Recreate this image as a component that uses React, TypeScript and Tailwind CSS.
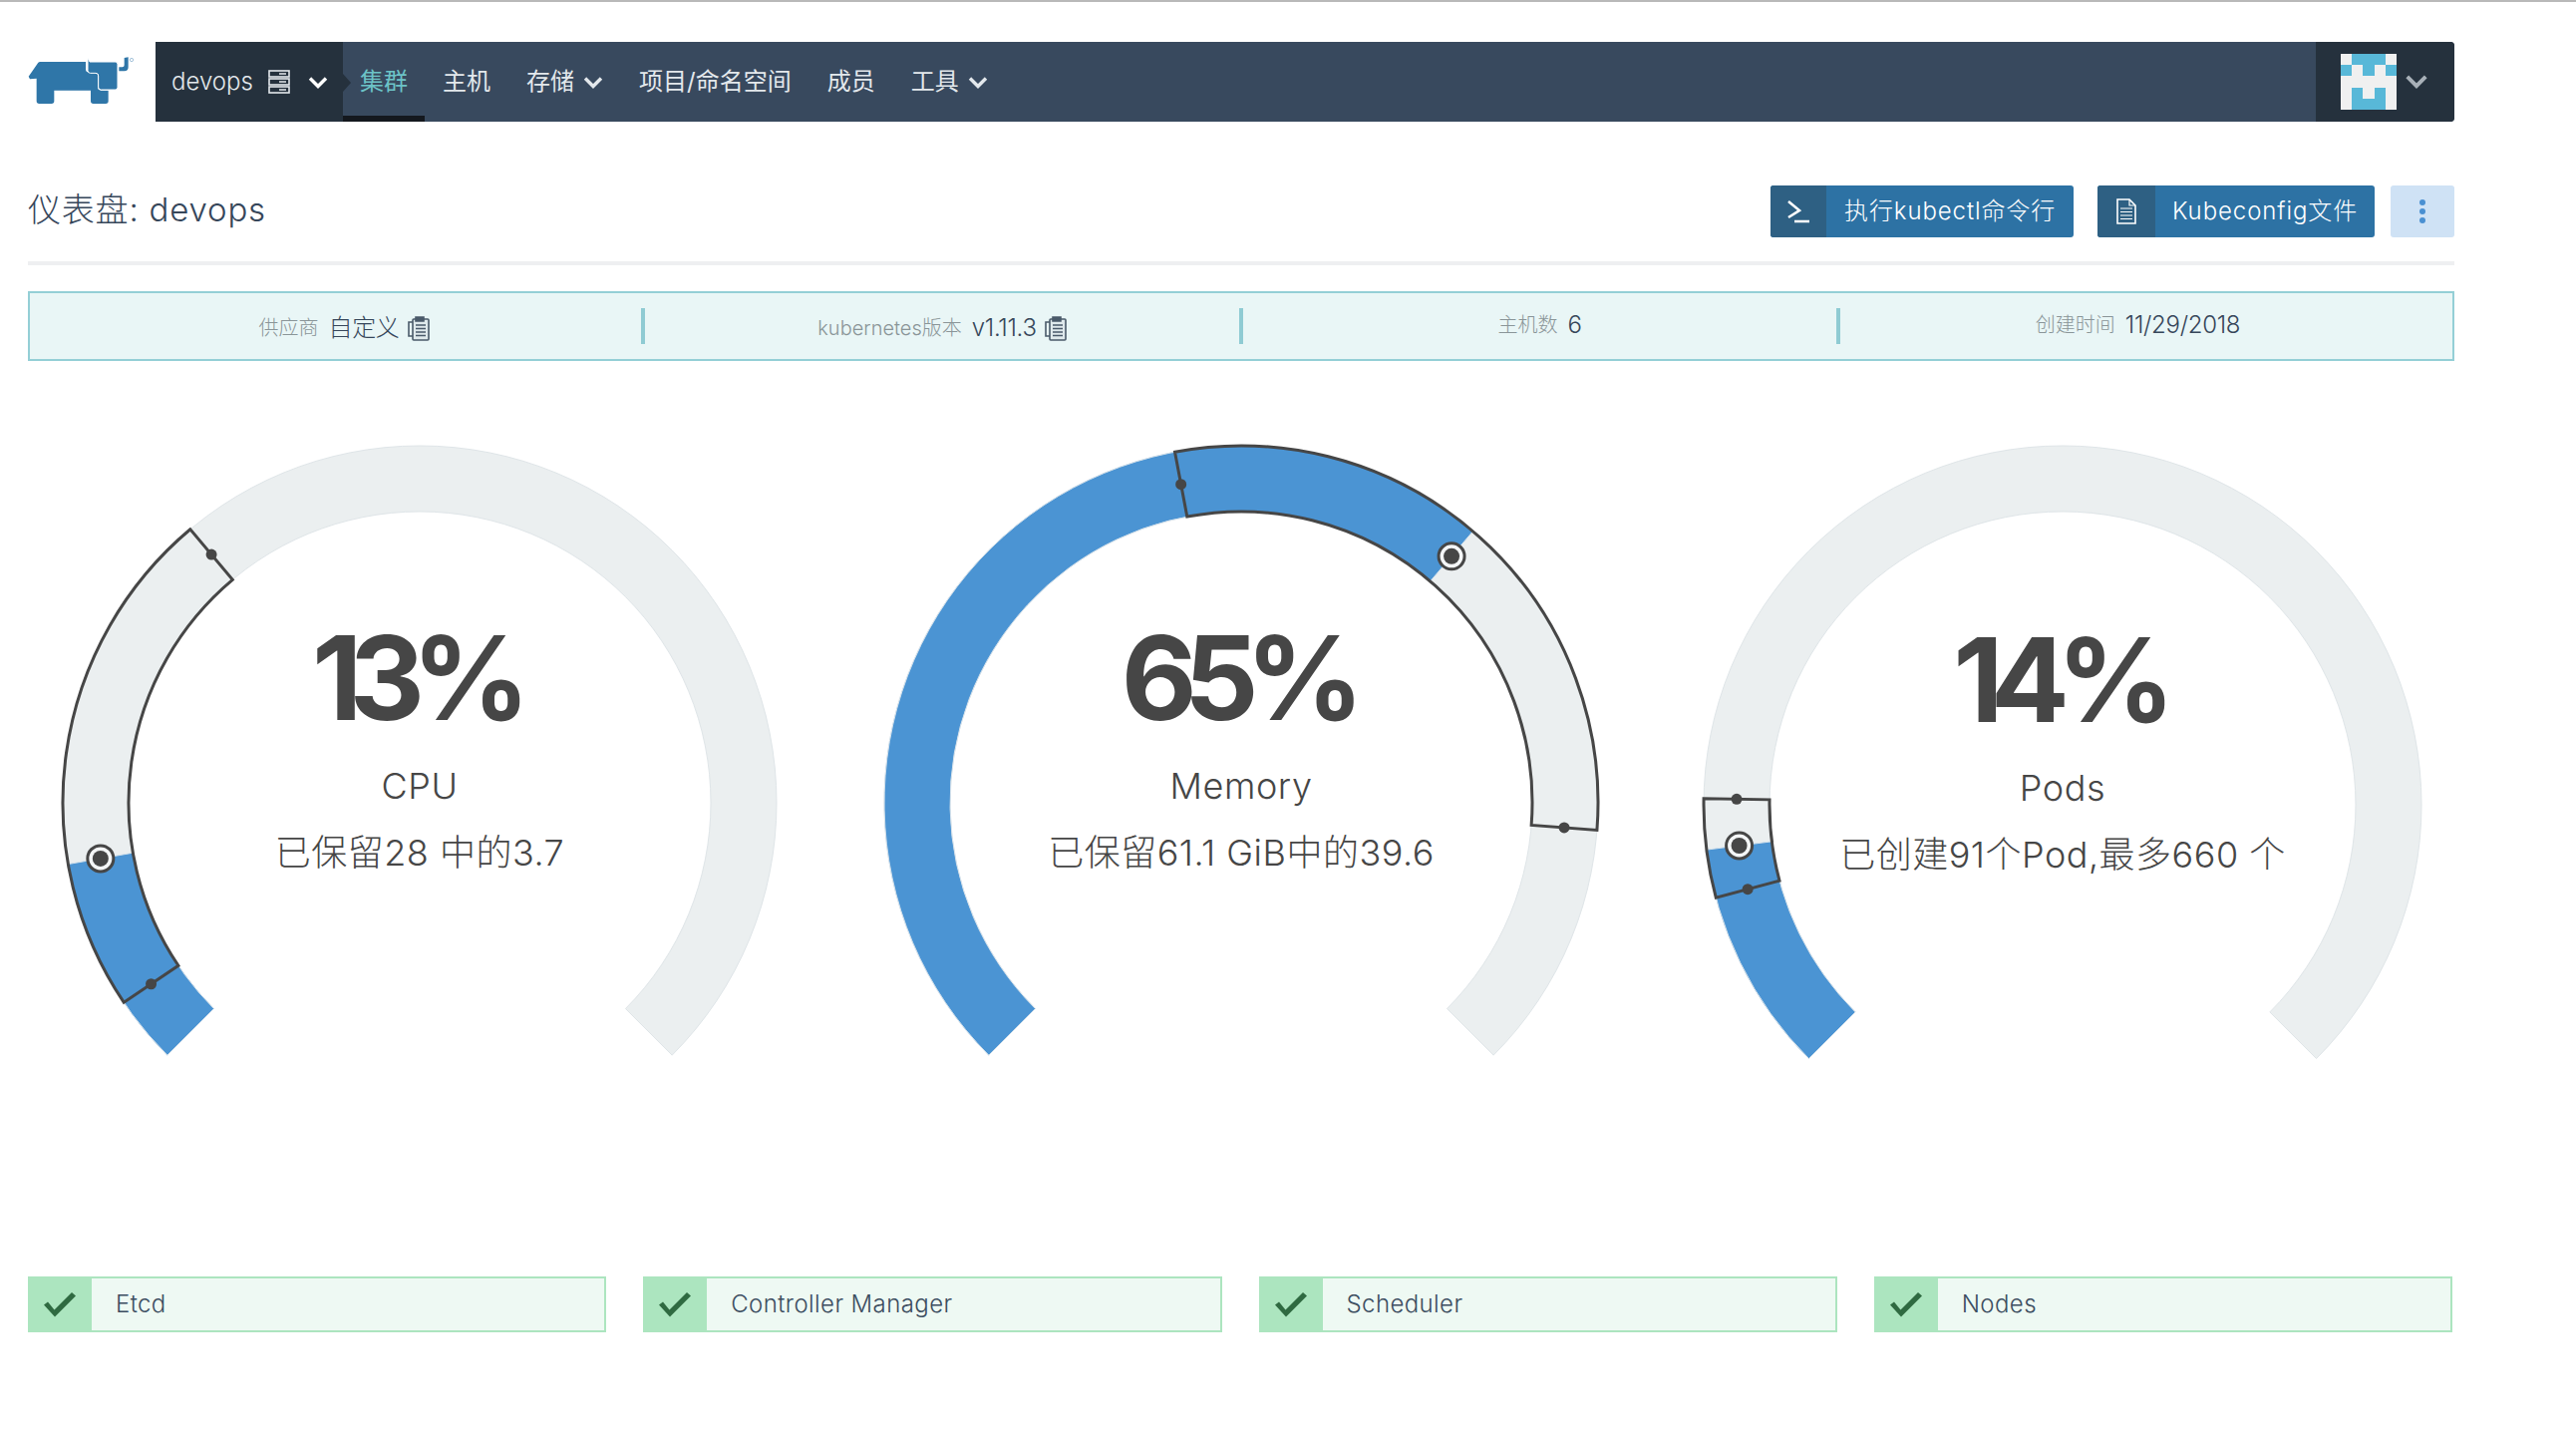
const fontStack = "font-['Inter','Noto_Sans_CJK_SC',sans-serif]";

function polar(cx: number, cy: number, r: number, deg: number) {
  const a = ((deg - 90) * Math.PI) / 180;
  return [cx + r * Math.cos(a), cy + r * Math.sin(a)];
}

function sector(cx: number, cy: number, r0: number, r1: number, a0: number, a1: number) {
  const [ax, ay] = polar(cx, cy, r1, a0);
  const [bx, by] = polar(cx, cy, r1, a1);
  const [c, d] = polar(cx, cy, r0, a1);
  const [e, f] = polar(cx, cy, r0, a0);
  const large = a1 - a0 > 180 ? 1 : 0;
  return `M${ax} ${ay}A${r1} ${r1} 0 ${large} 1 ${bx} ${by}L${c} ${d}A${r0} ${r0} 0 ${large} 0 ${e} ${f}Z`;
}

interface GaugeProps {
  pct: number;
  label: string;
  detail: string;
  lo: number;
  hi: number;
  outer: number;
  cy: number;
}

function Gauge({ pct, label, detail, lo, hi, outer, cy }: GaugeProps) {
  const cx = 412;
  const inner = outer - 66;
  const mid = outer - 33;
  const fillEnd = -135 + (pct / 100) * 270;
  const target = polar(cx, cy, mid, fillEnd);
  const dotLo = polar(cx, cy, mid, lo);
  const dotHi = polar(cx, cy, mid, hi);

  return (
    <div className="relative h-[680px]">
      <svg width="824" height="680" viewBox="0 0 824 680" className="absolute left-0 top-0">
        <path d={sector(cx, cy, inner, outer, -135, 135)} fill="#ebeff0" stroke="#dfe5e8" strokeWidth="1" />
        <path d={sector(cx, cy, inner, outer, -135, fillEnd)} fill="#4b94d3" stroke="#d5e2ec" strokeWidth="1" />
        <path d={sector(cx, cy, inner, outer, lo, hi)} fill="none" stroke="#464646" strokeWidth="3" />
        <circle cx={dotLo[0]} cy={dotLo[1]} r="5.5" fill="#464646" />
        <circle cx={dotHi[0]} cy={dotHi[1]} r="5.5" fill="#464646" />
        <circle cx={target[0]} cy={target[1]} r="13" fill="#f4f6f7" stroke="#464646" strokeWidth="3" />
        <circle cx={target[0]} cy={target[1]} r="8" fill="#464646" />
      </svg>
      <div className={`absolute left-0 right-0 top-[200px] flex flex-col items-center text-[#464646] ${cy > 385 ? 'pt-[2px]' : ''}`}>
        <div className="h-[120px] pr-[10px] text-[117px] leading-[120px] font-bold tracking-[-13px]">{pct}%</div>
        <div className="mt-[26px] h-[44px] text-[36px] leading-[44px] font-light tracking-[0.6px]">{label}</div>
        <div className="mt-[23px] h-[44px] text-[36px] leading-[44px] font-light tracking-[0.5px] whitespace-pre">{detail}</div>
      </div>
    </div>
  );
}

function Chevron({ className }: { className: string }) {
  return (
    <svg viewBox="0 0 20 13" fill="none" className={className}>
      <path d="M2 2.5 10 10.5 18 2.5" stroke="currentColor" strokeWidth="3.4" />
    </svg>
  );
}

function ClipboardIcon() {
  return (
    <svg width="22" height="26" viewBox="0 0 22 26" fill="none" stroke="#4a5a6a" strokeWidth="1.6" className="ml-[8px]">
      <rect x="5" y="4" width="16" height="21" rx="1" fill="#dfe9ec" />
      <path d="M5 7H1v14h4" />
      <path d="M8 2h8v4H8z" fill="#4a5a6a" />
      <path d="M8 10h10M8 13.5h10M8 17h10M8 20.5h10" />
    </svg>
  );
}

function NavItem({ label, arrow }: { label: string; arrow?: boolean }) {
  return (
    <div className="flex items-center pl-[18px] pr-[18px] text-[24px] text-[#e3e8ec] whitespace-nowrap">
      {label}
      {arrow && <Chevron className="ml-[9px] w-[20px] h-[13px] text-[#e3e8ec]" />}
    </div>
  );
}

const avatarCells = [0, 1, 1, 1, 0, 1, 0, 1, 0, 1, 0, 0, 0, 0, 0, 0, 1, 0, 1, 0, 0, 1, 1, 1, 0];

function Info({ label, value, clip }: { label: string; value: string; clip?: boolean }) {
  return (
    <div className={`flex items-center justify-center gap-[10px] ${clip ? 'translate-y-[2px]' : '-translate-y-[1px]'}`}>
      <span className="text-[20px] text-[#8a9598] font-light">{label}</span>
      <span className="flex items-center text-[24px] text-[#36465a] font-light tracking-[-0.3px]">
        {value}
        {clip && <ClipboardIcon />}
      </span>
    </div>
  );
}

function Status({ label }: { label: string }) {
  return (
    <div className="flex h-[56px] border-2 border-l-0 border-[#ace5bf] bg-[#eef9f3]">
      <div className="flex w-[64px] items-center justify-center bg-[#ace5bf]">
        <svg width="34" height="26" viewBox="0 0 34 26">
          <path d="M1 13.5 5 10.5 11.5 18.5 29 1 33 4.5 12 25.5Z" fill="#2f6a41" />
        </svg>
      </div>
      <div className="flex items-center pl-[24px] text-[24px] text-[#3c4d60] font-light tracking-[0.4px]">{label}</div>
    </div>
  );
}

export default function App() {
  return (
    <div className={`min-h-[1442px] bg-white ${fontStack}`}>
      <div className="h-[2px] bg-[#b9b9b9]" />

      <div className="ml-[28px] w-[2434px]">
        {/* Header */}
        <header className="mt-[40px] flex h-[80px]">
          <div className="w-[128px] pt-[14px]">
            <svg width="110" height="50" viewBox="86 78 330 150">
              <path
                d="M88 140 116 100Q118 96 124 96H260V118Q260 128 270 128H296V172Q296 182 306 182H275V214Q275 222 283 222H320Q328 222 328 214V182H165V214Q165 222 157 222H120Q112 222 112 214V146L92 148Z"
                fill="#2f76a8"
              />
              <path
                d="M266 84 272 96H350Q356 96 356 104V172Q356 180 350 180H306Q298 180 298 172V138Q298 130 290 130H274Q266 130 266 122Z"
                fill="#2f76a8"
                stroke="#fff"
                strokeWidth="3"
              />
              <path d="M376 84 388 82V112Q388 124 376 124H360V112H370Q376 112 376 106Z" fill="#2f76a8" />
              <circle cx="398" cy="90" r="5" fill="none" stroke="#7fa9c8" strokeWidth="2" />
            </svg>
          </div>

          <nav className="flex flex-1 rounded-r-[4px] bg-[#38495e]">
            <div className="flex w-[188px] items-center bg-[#25313d] pl-[16px] text-[24px] text-[#e3e8ec] font-light">
              devops
              <svg width="22" height="24" viewBox="0 0 22 24" fill="none" stroke="#e3e8ec" strokeWidth="1.6" className="ml-[15px]">
                <rect x="1" y="1" width="20" height="6" />
                <rect x="1" y="9" width="20" height="6" />
                <rect x="1" y="17" width="20" height="6" />
                <path d="M11 4h7M11 12h7M11 20h7" />
              </svg>
              <Chevron className="ml-[18px] w-[20px] h-[13px] text-white" />
            </div>

            <div className="relative flex w-[82px] items-center justify-center border-b-[6px] border-[#14181e] pt-[6px] text-[24px] text-[#6cc3c7]">
              <span className="absolute left-0 top-[32px] h-0 w-0 border-y-[9px] border-l-[8px] border-y-transparent border-l-[#25313d]" />
              集群
            </div>
            <NavItem label="主机" />
            <NavItem label="存储" arrow />
            <NavItem label="项目/命名空间" />
            <NavItem label="成员" />
            <NavItem label="工具" arrow />

            <div className="ml-auto flex w-[139px] items-center rounded-r-[4px] bg-[#25313d] pl-[25px]">
              <div className="grid h-[56px] w-[56px] grid-cols-5">
                {avatarCells.map((on, i) => (
                  <div key={i} className={on ? 'bg-[#58b8d8]' : 'bg-[#f0f0f0]'} />
                ))}
              </div>
              <Chevron className="ml-[8px] -mt-[2px] w-[24px] h-[15px] text-[#a8b0b8]" />
            </div>
          </nav>
        </header>

        {/* Title */}
        <div className="mt-[64px] flex h-[52px] items-center justify-between">
          <h1 className="-mt-[2px] text-[33px] font-light text-[#36465a] tracking-[0.8px]">仪表盘: devops</h1>
          <div className="flex items-stretch h-[52px]">
            <button className="flex w-[304px] items-stretch overflow-hidden rounded-[3px] bg-[#2d72a4] text-[24px] text-white font-light tracking-[0.9px]">
              <span className="flex w-[56px] items-center justify-center bg-[#2e6083]">
                <svg width="24" height="24" viewBox="0 0 24 24" fill="none" stroke="#fff" strokeWidth="2.6">
                  <path d="M2 2 13 11 2 18" />
                  <path d="M8 22H23" />
                </svg>
              </span>
              <span className="flex flex-1 items-center pl-[18px] whitespace-nowrap">执行kubectl命令行</span>
            </button>
            <button className="ml-[24px] flex w-[278px] items-stretch overflow-hidden rounded-[3px] bg-[#2d72a4] text-[24px] text-white font-light tracking-[0.9px]">
              <span className="flex w-[58px] items-center justify-center bg-[#2e6083]">
                <svg width="20" height="26" viewBox="0 0 20 26" fill="none" stroke="#fff" strokeWidth="1.6">
                  <path d="M1 1H13L19 7V25H1Z" />
                  <path d="M13 1V7H19M4 10H16M4 13.5H16M4 17H16M4 20.5H16" strokeWidth="1.2" />
                </svg>
              </span>
              <span className="flex flex-1 items-center pl-[17px] whitespace-nowrap">Kubeconfig文件</span>
            </button>
            <button className="ml-[16px] flex w-[64px] flex-col items-center justify-center gap-[3px] rounded-[3px] bg-[#cfe2f5]">
              <span className="h-[6px] w-[6px] rounded-full bg-[#4a90d2]" />
              <span className="h-[6px] w-[6px] rounded-full bg-[#4a90d2]" />
              <span className="h-[6px] w-[6px] rounded-full bg-[#4a90d2]" />
            </button>
          </div>
        </div>

        <div className="mt-[24px] h-[4px] bg-[#eeeff1]" />

        {/* Cluster info */}
        <div className="mt-[26px] flex h-[70px] items-center border-2 border-[#94cfd6] bg-[#e9f6f6] px-[17px]">
          <div className="flex h-[36px] w-[600px] items-center justify-center border-r-[4px] border-[#8fcbd3]"><Info label="供应商" value="自定义" clip /></div>
          <div className="flex h-[36px] w-[600px] items-center justify-center border-r-[4px] border-[#8fcbd3]"><Info label="kubernetes版本" value="v1.11.3" clip /></div>
          <div className="flex h-[36px] w-[599px] items-center justify-center border-r-[4px] border-[#8fcbd3]"><Info label="主机数" value="6" /></div>
          <div className="flex h-[36px] flex-1 items-center justify-center"><Info label="创建时间" value="11/29/2018" /></div>
        </div>

        {/* Gauges */}
        <div className="-ml-[19px] mt-[58px] grid w-[2472px] grid-cols-3">
          <Gauge pct={13} label="CPU" detail="已保留28 中的3.7" lo={-124} hi={-40} outer={358} cy={385} />
          <Gauge pct={65} label="Memory" detail="已保留61.1 GiB中的39.6" lo={-10.7} hi={94.4} outer={358} cy={385} />
          <Gauge pct={14} label="Pods" detail="已创建91个Pod,最多660 个" lo={-105} hi={-89} outer={360} cy={387} />
        </div>

        {/* Components */}
        <div className="mt-[180px] grid w-[2432px] grid-cols-4 gap-[37px]">
          <Status label="Etcd" />
          <Status label="Controller Manager" />
          <Status label="Scheduler" />
          <Status label="Nodes" />
        </div>
      </div>
    </div>
  );
}
